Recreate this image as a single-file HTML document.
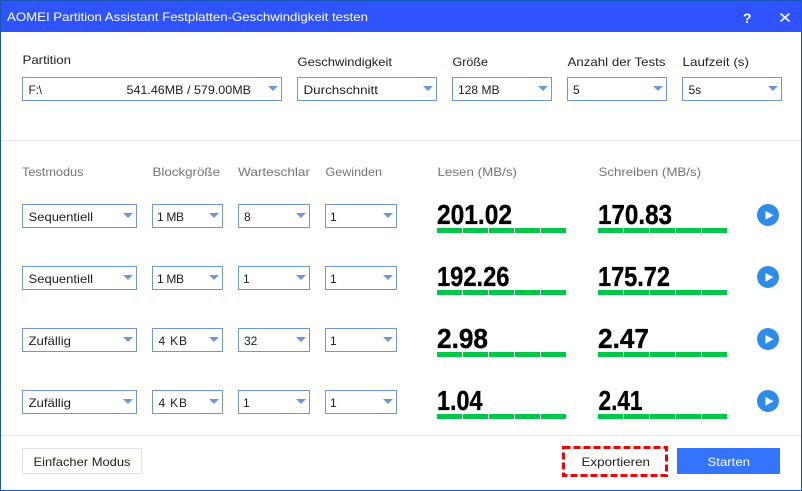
<!DOCTYPE html>
<html><head><meta charset="utf-8"><style>
html,body{margin:0;padding:0;background:#fff;width:802px;height:491px;overflow:hidden}
svg{display:block}
text{font-family:"Liberation Sans",sans-serif;font-size:12px;fill:#1c1c1c}
.t{fill:#fff;font-size:12px}
.h{fill:#757575}
.l{fill:#222}
.n{font-weight:bold;font-size:27.5px;fill:#000;stroke:#000;stroke-width:.35}
.b{fill:#fff;stroke:#6f97d8;stroke-width:1}
.a{fill:#6f97d8}
.g{fill:#00c74a}
.p{fill:#2e8be8}
</style></head><body>
<svg width="802" height="491" viewBox="0 0 802 491" xmlns="http://www.w3.org/2000/svg">
<rect width="802" height="491" fill="#fff"/>
<rect x="0" y="0" width="802" height="32" fill="#2f54ff"/>
<rect x="0.5" y="0.5" width="801" height="490" fill="none" stroke="#1558b0"/>
<rect x="1" y="140" width="800" height="1" fill="#e6e9ef"/>
<rect x="1" y="435" width="800" height="1" fill="#e6e9ef"/>

<text class="t" x="7" y="21" textLength="361" lengthAdjust="spacingAndGlyphs">AOMEI Partition Assistant Festplatten-Geschwindigkeit testen</text>
<text class="t" x="743" y="23" style="font-size:14px;font-weight:bold" textLength="8.5" lengthAdjust="spacingAndGlyphs">?</text>
<path d="M780.5 13.5 L789.5 21.5 M789.5 13.5 L780.5 21.5" stroke="#eef1ff" stroke-width="1.8" fill="none"/>

<text class="l" x="22.5" y="64" textLength="48.5" lengthAdjust="spacingAndGlyphs">Partition</text>
<text class="l" x="297.5" y="66" textLength="94.5" lengthAdjust="spacingAndGlyphs">Geschwindigkeit</text>
<text class="l" x="452.5" y="66" textLength="35.5" lengthAdjust="spacingAndGlyphs">Größe</text>
<text class="l" x="567.5" y="66" textLength="98" lengthAdjust="spacingAndGlyphs">Anzahl der Tests</text>
<text class="l" x="682.5" y="66" textLength="66.5" lengthAdjust="spacingAndGlyphs">Laufzeit (s)</text>

<rect class="b" x="22.5" y="77.5" width="259" height="23"/><path class="a" d="M268 86h10l-5 5z"/>
<rect class="b" x="297.5" y="77.5" width="139" height="23"/><path class="a" d="M423 86h10l-5 5z"/>
<rect class="b" x="452.5" y="77.5" width="99" height="23"/><path class="a" d="M538 86h10l-5 5z"/>
<rect class="b" x="567.5" y="77.5" width="99" height="23"/><path class="a" d="M653 86h10l-5 5z"/>
<rect class="b" x="682.5" y="77.5" width="99" height="23"/><path class="a" d="M768 86h10l-5 5z"/>

<text x="28.5" y="94" textLength="13.5" lengthAdjust="spacing">F:\</text>
<text x="126.5" y="94" textLength="124.5" lengthAdjust="spacingAndGlyphs">541.46MB / 579.00MB</text>
<text x="303.5" y="94" textLength="74.5" lengthAdjust="spacingAndGlyphs">Durchschnitt</text>
<text x="458" y="94" textLength="41.5" lengthAdjust="spacing">128 MB</text>
<text x="573" y="94">5</text>
<text x="688.5" y="94">5s</text>

<text class="h" x="22" y="176" textLength="61.5" lengthAdjust="spacingAndGlyphs">Testmodus</text>
<text class="h" x="152.5" y="176" textLength="67.5" lengthAdjust="spacingAndGlyphs">Blockgröße</text>
<text class="h" x="238" y="176" textLength="72" lengthAdjust="spacingAndGlyphs">Warteschlar</text>
<text class="h" x="325.5" y="176" textLength="56.5" lengthAdjust="spacingAndGlyphs">Gewinden</text>
<text class="h" x="437.5" y="176" textLength="79.5" lengthAdjust="spacingAndGlyphs">Lesen (MB/s)</text>
<text class="h" x="598.5" y="176" textLength="102.5" lengthAdjust="spacingAndGlyphs">Schreiben (MB/s)</text>

<!-- Row 1 -->
<g>
<rect class="b" x="22.5" y="204.5" width="114" height="23"/><path class="a" d="M123 213h10l-5 5z"/>
<rect class="b" x="152.5" y="204.5" width="70" height="23"/><path class="a" d="M209 213h10l-5 5z"/>
<rect class="b" x="238.5" y="204.5" width="71" height="23"/><path class="a" d="M296 213h10l-5 5z"/>
<rect class="b" x="325.5" y="204.5" width="71" height="23"/><path class="a" d="M383 213h10l-5 5z"/>
<text x="28.5" y="221" textLength="64.5" lengthAdjust="spacingAndGlyphs">Sequentiell</text>
<text x="157" y="221" textLength="27" lengthAdjust="spacing">1 MB</text>
<text x="244" y="221">8</text>
<text x="330" y="221">1</text>
<text class="n" x="437" y="224" textLength="75" lengthAdjust="spacingAndGlyphs">201.02</text>
<text class="n" x="598" y="224" textLength="74" lengthAdjust="spacingAndGlyphs">170.83</text>
<path class="g" d="M437 228h25v5h-25zM463 228h25v5h-25zM489 228h25v5h-25zM515 228h25v5h-25zM541 228h25v5h-25z"/>
<path class="g" d="M598 228h25v5h-25zM624 228h25v5h-25zM650 228h25v5h-25zM676 228h25v5h-25zM702 228h25v5h-25z"/>
<circle class="p" cx="768" cy="215" r="11"/><path d="M765.5 211v8.6l8-4.3z" fill="#fff"/>
</g>
<!-- Row 2 -->
<g>
<rect class="b" x="22.5" y="266.5" width="114" height="23"/><path class="a" d="M123 275h10l-5 5z"/>
<rect class="b" x="152.5" y="266.5" width="70" height="23"/><path class="a" d="M209 275h10l-5 5z"/>
<rect class="b" x="238.5" y="266.5" width="71" height="23"/><path class="a" d="M296 275h10l-5 5z"/>
<rect class="b" x="325.5" y="266.5" width="71" height="23"/><path class="a" d="M383 275h10l-5 5z"/>
<text x="28.5" y="283" textLength="64.5" lengthAdjust="spacingAndGlyphs">Sequentiell</text>
<text x="157" y="283" textLength="27" lengthAdjust="spacing">1 MB</text>
<text x="243" y="283">1</text>
<text x="330" y="283">1</text>
<text class="n" x="437" y="286" textLength="72.5" lengthAdjust="spacingAndGlyphs">192.26</text>
<text class="n" x="598" y="286" textLength="72" lengthAdjust="spacingAndGlyphs">175.72</text>
<path class="g" d="M437 290h25v5h-25zM463 290h25v5h-25zM489 290h25v5h-25zM515 290h25v5h-25zM541 290h25v5h-25z"/>
<path class="g" d="M598 290h25v5h-25zM624 290h25v5h-25zM650 290h25v5h-25zM676 290h25v5h-25zM702 290h25v5h-25z"/>
<circle class="p" cx="768" cy="277" r="11"/><path d="M765.5 273v8.6l8-4.3z" fill="#fff"/>
</g>
<!-- Row 3 -->
<g>
<rect class="b" x="22.5" y="328.5" width="114" height="23"/><path class="a" d="M123 337h10l-5 5z"/>
<rect class="b" x="152.5" y="328.5" width="70" height="23"/><path class="a" d="M209 337h10l-5 5z"/>
<rect class="b" x="238.5" y="328.5" width="71" height="23"/><path class="a" d="M296 337h10l-5 5z"/>
<rect class="b" x="325.5" y="328.5" width="71" height="23"/><path class="a" d="M383 337h10l-5 5z"/>
<text x="28.5" y="345" textLength="42.5" lengthAdjust="spacingAndGlyphs">Zufällig</text>
<text x="158.5" y="345" textLength="28.5" lengthAdjust="spacing">4 KB</text>
<text x="244" y="345">32</text>
<text x="330" y="345">1</text>
<text class="n" x="437" y="348" textLength="51" lengthAdjust="spacingAndGlyphs">2.98</text>
<text class="n" x="598" y="348" textLength="51" lengthAdjust="spacingAndGlyphs">2.47</text>
<path class="g" d="M437 352h25v5h-25zM463 352h25v5h-25zM489 352h25v5h-25zM515 352h25v5h-25zM541 352h25v5h-25z"/>
<path class="g" d="M598 352h25v5h-25zM624 352h25v5h-25zM650 352h25v5h-25zM676 352h25v5h-25zM702 352h25v5h-25z"/>
<circle class="p" cx="768" cy="339" r="11"/><path d="M765.5 335v8.6l8-4.3z" fill="#fff"/>
</g>
<!-- Row 4 -->
<g>
<rect class="b" x="22.5" y="390.5" width="114" height="23"/><path class="a" d="M123 399h10l-5 5z"/>
<rect class="b" x="152.5" y="390.5" width="70" height="23"/><path class="a" d="M209 399h10l-5 5z"/>
<rect class="b" x="238.5" y="390.5" width="71" height="23"/><path class="a" d="M296 399h10l-5 5z"/>
<rect class="b" x="325.5" y="390.5" width="71" height="23"/><path class="a" d="M383 399h10l-5 5z"/>
<text x="28.5" y="407" textLength="42.5" lengthAdjust="spacingAndGlyphs">Zufällig</text>
<text x="158.5" y="407" textLength="28.5" lengthAdjust="spacing">4 KB</text>
<text x="243" y="407">1</text>
<text x="330" y="407">1</text>
<text class="n" x="437" y="410" textLength="45.5" lengthAdjust="spacingAndGlyphs">1.04</text>
<text class="n" x="598.5" y="410" textLength="44" lengthAdjust="spacingAndGlyphs">2.41</text>
<path class="g" d="M437 414h25v5h-25zM463 414h25v5h-25zM489 414h25v5h-25zM515 414h25v5h-25zM541 414h25v5h-25z"/>
<path class="g" d="M598 414h25v5h-25zM624 414h25v5h-25zM650 414h25v5h-25zM676 414h25v5h-25zM702 414h25v5h-25z"/>
<circle class="p" cx="768" cy="401" r="11"/><path d="M765.5 397v8.6l8-4.3z" fill="#fff"/>
</g>

<rect x="22.5" y="448.5" width="119" height="25" fill="#fff" stroke="#dde2ec"/>
<text class="l" x="33.5" y="466" textLength="97" lengthAdjust="spacingAndGlyphs">Einfacher Modus</text>

<rect x="563.5" y="447.5" width="103" height="28" fill="#fff" stroke="#f00000" stroke-width="3" stroke-dasharray="7 3"/>
<text class="l" x="581.5" y="466" textLength="68.5" lengthAdjust="spacingAndGlyphs">Exportieren</text>

<rect x="677" y="448" width="103" height="26" fill="#3474ff"/>
<text x="707.5" y="466" style="fill:#fff" textLength="42.5" lengthAdjust="spacingAndGlyphs">Starten</text>
</svg>
</body></html>
